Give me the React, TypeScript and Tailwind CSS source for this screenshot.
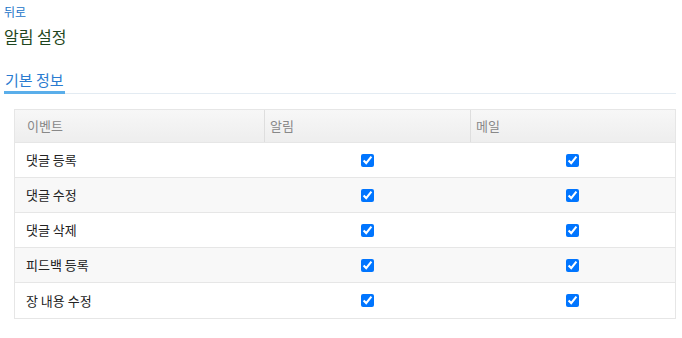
import React from "react";

const rows = ["댓글 등록", "댓글 수정", "댓글 삭제", "피드백 등록", "장 내용 수정"];

const App = () => {
    return (
        <div className="px-[4px] pt-[4px] pb-5 bg-white" style={{ fontFamily: '"Noto Sans CJK KR", "Noto Sans", sans-serif' }}>
            <div className="text-[12px] leading-[16px] text-[#1a73c8]">뒤로</div>
            <div className="mt-[5px] text-[16px] leading-[22px] text-[#1e4620]">알림 설정</div>
            <div className="mt-[20px] border-b border-[#e3ebf2] mr-[2px]">
                <div className="inline-block text-[15px] leading-[20px] text-[#2a7bd0] px-[1px] pb-[1px] border-b-[3px] border-[#5aaeea] -mb-px">
                    기본 정보
                </div>
            </div>
            <div className="mt-[15px] ml-[10px] mr-[2px] border border-[#e6e6e6]">
                <div className="grid grid-cols-[249px_206px_1fr] h-[33px] bg-gradient-to-b from-[#f7f7f7] to-[#eeeeee] border-b border-[#e6e6e6] text-[13px] text-[#888]">
                    <div className="flex items-center pl-[12px]">이벤트</div>
                    <div className="flex items-center pl-[5px] border-l border-[#dedede]">알림</div>
                    <div className="flex items-center pl-[5px] border-l border-[#dedede]">메일</div>
                </div>
                {rows.map((r, i) => (
                    <div
                        key={r}
                        className={
                            "grid grid-cols-[249px_206px_1fr] h-[35px] text-[13px] text-[#222] " +
                            (i % 2 === 1 ? "bg-[#f8f8f8]" : "bg-white") +
                            (i < rows.length - 1 ? " border-b border-[#e6e6e6]" : "")
                        }
                    >
                        <div className="flex items-center pl-[11px]">{r}</div>
                        <div className="flex items-center justify-center">
                            <input type="checkbox" defaultChecked className="w-[13px] h-[13px] m-0" />
                        </div>
                        <div className="flex items-center justify-center">
                            <input type="checkbox" defaultChecked className="w-[13px] h-[13px] m-0" />
                        </div>
                    </div>
                ))}
            </div>
        </div>
    );
};
export default App;
